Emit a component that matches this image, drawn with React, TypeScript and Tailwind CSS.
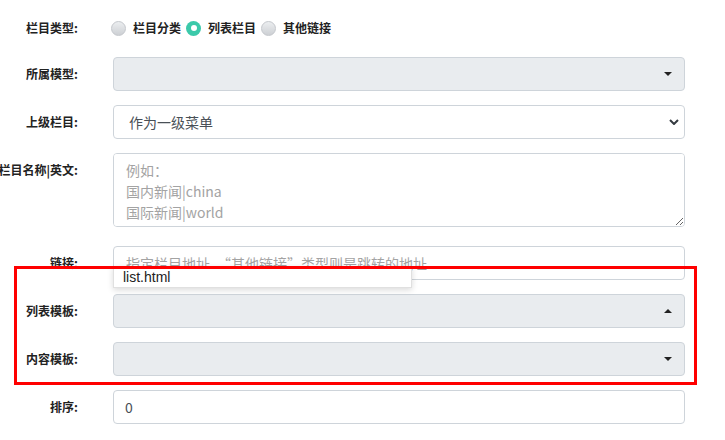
import React from "react";

const CJK = "font-['Noto_Sans_CJK_SC',sans-serif]";

function Label({ text }: { text: string }) {
  return (
    <div className="flex justify-end w-[78px] shrink-0 pt-[7px]">
      <span className="whitespace-nowrap text-[12px] leading-[20px] font-bold text-[#222]">{text}</span>
    </div>
  );
}

function Radio({ checked }: { checked?: boolean }) {
  if (checked)
    return (
      <span className="w-[15px] h-[15px] rounded-full bg-[#3bc9aa] flex items-center justify-center shrink-0">
        <span className="w-[6px] h-[6px] rounded-full bg-white" />
      </span>
    );
  return (
    <span className="w-[15px] h-[15px] rounded-full border border-[#c4c7cc] bg-gradient-to-b from-[#eceef0] to-[#cdd0d4] shrink-0" />
  );
}

function Caret({ up }: { up?: boolean }) {
  return (
    <svg width="8" height="4" viewBox="0 0 8 4" className="absolute right-[12px] top-1/2 -translate-y-1/2">
      {up ? <path d="M0 4 L4 0 L8 4 Z" fill="#222" /> : <path d="M0 0 L8 0 L4 4 Z" fill="#222" />}
    </svg>
  );
}

export default function App() {
  return (
    <div className={`relative w-[725px] h-[440px] bg-white overflow-hidden ${CJK}`}>
      <div className="flex flex-col pt-[11px]">
        {/* 栏目类型 */}
        <div className="flex h-[34px] mb-[12px]">
          <Label text="栏目类型:" />
          <div className="ml-[33px] flex items-center h-[34px] text-[12px] font-bold text-[#222]">
            <Radio />
            <span className="ml-[7px]">栏目分类</span>
            <span className="ml-[5px]" />
            <Radio checked />
            <span className="ml-[7px]">列表栏目</span>
            <span className="ml-[5px]" />
            <Radio />
            <span className="ml-[7px]">其他链接</span>
          </div>
        </div>

        {/* 所属模型 */}
        <div className="flex mb-[14px]">
          <Label text="所属模型:" />
          <div className="ml-[35px] relative w-[572px] h-[34px] rounded-[4px] border border-[#ced4da] bg-[#e9ecef]">
            <Caret />
          </div>
        </div>

        {/* 上级栏目 */}
        <div className="flex mb-[14px]">
          <Label text="上级栏目:" />
          <div className="ml-[35px] relative w-[572px] h-[34px] rounded-[4px] border border-[#ced4da] bg-white flex items-center pl-[15px] text-[14px] text-[#495057]">
            作为一级菜单
            <svg width="10" height="6" viewBox="0 0 10 6" className="absolute right-[5px] top-1/2 -translate-y-1/2">
              <path d="M1 1 L5 5 L9 1" fill="none" stroke="#343a40" strokeWidth="2" />
            </svg>
          </div>
        </div>

        {/* 栏目名称 */}
        <div className="flex mb-[19px]">
          <Label text="栏目名称|英文:" />
          <textarea
            readOnly
            className="ml-[35px] block w-[572px] h-[74px] rounded-[4px] border border-[#ced4da] bg-white px-[12px] py-[6px] text-[14px] leading-[21px] text-[#495057] placeholder:text-[#a3a3a3] outline-none"
            placeholder={"例如：\n国内新闻|china\n国际新闻|world"}
          />
        </div>

        {/* 链接 */}
        <div className="flex mb-[14px]">
          <Label text="链接:" />
          <input
            readOnly
            className="ml-[35px] block w-[572px] h-[34px] rounded-[4px] border border-[#ced4da] bg-white px-[12px] text-[14px] text-[#495057] placeholder:text-[#a3a3a3] outline-none"
            placeholder="指定栏目地址，“其他链接”类型则是跳转的地址"
          />
        </div>

        {/* 列表模板 */}
        <div className="flex mb-[14px]">
          <Label text="列表模板:" />
          <div className="ml-[35px] relative w-[572px] h-[34px] rounded-[4px] border border-[#ced4da] bg-[#e9ecef]">
            <Caret up />
          </div>
        </div>

        {/* 内容模板 */}
        <div className="flex mb-[14px]">
          <Label text="内容模板:" />
          <div className="ml-[35px] relative w-[572px] h-[34px] rounded-[4px] border border-[#ced4da] bg-[#e9ecef]">
            <Caret />
          </div>
        </div>

        {/* 排序 */}
        <div className="flex">
          <Label text="排序:" />
          <div className="ml-[35px] w-[572px] h-[34px] rounded-[4px] border border-[#ced4da] bg-white flex items-center px-[11px] text-[14px] text-[#495057]">
            0
          </div>
        </div>
      </div>

      {/* autocomplete dropdown */}
      <div className="absolute left-[113px] top-[266px] w-[299px] h-[22px] bg-white border border-[#e0e0e0] shadow-[0_2px_6px_rgba(0,0,0,0.15)] flex items-center pl-[9px] text-[14px] text-[#222] font-['Liberation_Sans',sans-serif]">
        list.html
      </div>

      {/* red annotation box */}
      <div className="absolute left-[14px] top-[266px] w-[683px] h-[119px] border-[3px] border-[#ff0000] pointer-events-none" />
    </div>
  );
}
